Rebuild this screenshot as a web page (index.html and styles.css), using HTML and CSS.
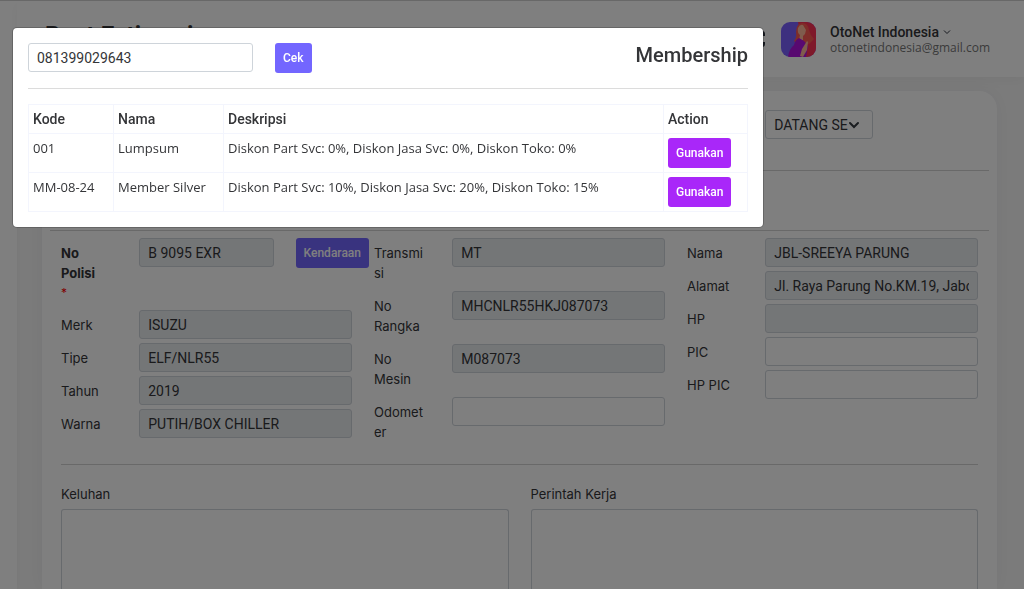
FILE: index.html
```html
<!DOCTYPE html>
<html lang="id">
<head>
<meta charset="utf-8">
<meta name="viewport" content="width=device-width, initial-scale=1">
<title>Buat Estimasi</title>
<link rel="stylesheet" href="styles.css">
</head>
<body>
<div class="app">
  <aside class="sidebar"></aside>
  <div class="main">
    <header class="topbar">
      <h1 class="page-title">Buat Estimasi</h1>
      <svg class="expand" viewBox="0 0 18 18" aria-hidden="true"><path d="M2 6V4q0-2 2-2h2M12 2h2q2 0 2 2v2M16 12v2q0 2-2 2h-2M6 16H4q-2 0-2-2v-2"/></svg>
      <div class="profile">
        <svg class="avatar" viewBox="0 0 35 35" role="img" aria-label="Avatar">
          <defs><clipPath id="round"><rect width="35" height="35" rx="9"/></clipPath></defs>
          <g clip-path="url(#round)">
            <rect width="35" height="35" fill="#7b61ff"/>
            <path d="M17 0h18v35H24z" fill="#ff3355"/>
            <path d="M13 19q3-3 2-9 0-8 6-9 6 0 7 7 1 5 5 9l-5 5-13-1z" fill="#ff5a52"/>
            <path d="M17 6q2-4 5-3l3 5-1 4-2 2v4h-4l1-5q-3-2-2-7z" fill="#ffb99a"/>
            <path d="M7 35q1-8 6-12 1-5 5-7l5 3 4 5-2 11z" fill="#b012e0"/>
            <path d="M21 27l5-8 1 1-1 8-4 7-3-1z" fill="#ffb99a"/>
          </g>
        </svg>
        <div class="who">
          <button class="user" type="button">OtoNet Indonesia
            <svg class="caret" viewBox="0 0 8 8" aria-hidden="true"><path d="M1 2.500l3 3 3-3"/></svg>
          </button>
          <span class="mail">otonetindonesia@gmail.com</span>
        </div>
      </div>
    </header>
    <main class="card">
      <div class="columns kind-row">
        <div class="kind">
          <div class="select-wrap">
            <select class="field select" aria-label="Jenis kedatangan"><option>DATANG SENDIRI</option></select>
            <svg class="chevron" viewBox="0 0 12 12" aria-hidden="true"><path d="M2 4l4 4 4-4"/></svg>
          </div>
        </div>
      </div>
      <hr class="rule">
      <div class="spacer"></div>
      <hr class="rule">
      <div class="columns">
        <div class="stack">
          <div class="row">
            <label class="label strong" for="polisi">No<br>Polisi <span class="star">*</span></label>
            <div class="with-button">
              <input class="field" id="polisi" value="B 9095 EXR" readonly>
              <button class="btn" type="button">Kendaraan</button>
            </div>
          </div>
          <div class="row"><label class="label" for="merk">Merk</label><input class="field" id="merk" value="ISUZU" readonly></div>
          <div class="row"><label class="label" for="tipe">Tipe</label><input class="field" id="tipe" value="ELF/NLR55" readonly></div>
          <div class="row"><label class="label" for="tahun">Tahun</label><input class="field" id="tahun" value="2019" readonly></div>
          <div class="row"><label class="label" for="warna">Warna</label><input class="field" id="warna" value="PUTIH/BOX CHILLER" readonly></div>
        </div>
        <div class="stack">
          <div class="row"><label class="label" for="transmisi">Transmi<br>si</label><input class="field" id="transmisi" value="MT" readonly></div>
          <div class="row"><label class="label" for="rangka">No<br>Rangka</label><input class="field" id="rangka" value="MHCNLR55HKJ087073" readonly></div>
          <div class="row"><label class="label" for="mesin">No<br>Mesin</label><input class="field" id="mesin" value="M087073" readonly></div>
          <div class="row"><label class="label" for="odo">Odomet<br>er</label><input class="field" id="odo"></div>
        </div>
        <div class="stack">
          <div class="row"><label class="label" for="nama">Nama</label><input class="field" id="nama" value="JBL-SREEYA PARUNG" readonly></div>
          <div class="row"><label class="label" for="alamat">Alamat</label><input class="field" id="alamat" value="Jl. Raya Parung No.KM.19, Jabon Mekar" readonly></div>
          <div class="row"><label class="label" for="hp">HP</label><input class="field" id="hp" readonly></div>
          <div class="row"><label class="label" for="pic">PIC</label><input class="field" id="pic"></div>
          <div class="row"><label class="label" for="hppic">HP PIC</label><input class="field" id="hppic"></div>
        </div>
      </div>
      <hr class="rule inner">
      <div class="notes">
        <div class="note"><label class="label" for="keluhan">Keluhan</label><textarea class="field area" id="keluhan"></textarea></div>
        <div class="note"><label class="label" for="perintah">Perintah Kerja</label><textarea class="field area" id="perintah"></textarea></div>
      </div>
    </main>
  </div>
</div>

<div class="backdrop">
  <section class="modal" role="dialog" aria-labelledby="modal-title">
    <div class="modal-head">
      <input class="field search" aria-label="Nomor member" value="081399029643">
      <button class="btn" type="button">Cek</button>
      <h2 class="modal-title" id="modal-title">Membership</h2>
    </div>
    <hr class="modal-rule">
    <table class="members">
      <colgroup><col class="c-kode"><col class="c-nama"><col><col class="c-action"></colgroup>
      <thead><tr><th>Kode</th><th>Nama</th><th>Deskripsi</th><th>Action</th></tr></thead>
      <tbody>
        <tr><td>001</td><td>Lumpsum</td><td>Diskon Part Svc: 0%, Diskon Jasa Svc: 0%, Diskon Toko: 0%</td><td><button class="btn use" type="button">Gunakan</button></td></tr>
        <tr><td>MM-08-24</td><td>Member Silver</td><td>Diskon Part Svc: 10%, Diskon Jasa Svc: 20%, Diskon Toko: 15%</td><td><button class="btn use" type="button">Gunakan</button></td></tr>
      </tbody>
    </table>
  </section>
</div>
</body>
</html>
```

FILE: styles.css
```css
* { box-sizing: border-box; }

body {
  margin: 0;
  height: 100vh;
  overflow: hidden;
  background: #f7f7f7;
  color: #343538;
  font-family: Roboto, "Liberation Sans", sans-serif;
  font-size: 14px;
  line-height: 20px;
}

.app { display: flex; height: 100vh; overflow: hidden; border-top: 1px solid #d0d0d0; }
.sidebar { flex: 0 0 17px; background: #fff; box-shadow: 0 0 6px rgba(0, 0, 0, .04); }
.main { display: flex; flex-direction: column; flex: 1; min-width: 0; }

.topbar {
  display: flex;
  flex: none;
  align-items: center;
  height: 76px;
  padding: 0 34px 0 28px;
  background: #fff;
  box-shadow: 0 3px 12px rgba(0, 0, 0, .04);
}
.page-title { margin: 0 auto 0 0; padding-bottom: 8px; font-size: 24px; line-height: 28px; font-weight: 700; }
.expand { width: 18px; height: 18px; margin-right: 15px; fill: none; stroke: #2c323f; stroke-width: 2; }
.profile { display: flex; align-items: center; gap: 14px; }
.avatar { width: 35px; height: 35px; }
.who { display: flex; flex-direction: column; }
.user {
  display: flex;
  align-items: center;
  gap: 4px;
  padding: 0;
  border: 0;
  background: none;
  color: inherit;
  font: 500 14px/16px Roboto, sans-serif;
}
.caret { width: 8px; height: 8px; fill: none; stroke: #2c323f; }
.mail { font: 12px/15px "Open Sans", sans-serif; color: #777; }

.card {
  display: flex;
  flex-direction: column;
  flex: 1;
  min-height: 0;
  margin: 14px 27px 0 25px;
  padding: 19px 8px 0;
  background: #fff;
  border-radius: 18px 18px 0 0;
  box-shadow: 0 0 20px rgba(8, 21, 66, .05);
}
.columns { display: grid; grid-template-columns: repeat(3, minmax(0, 1fr)); align-items: start; }
.rule { width: 100%; margin: 0; border: 0; border-top: 1px solid #d2d2d2; }
.kind-row { padding-bottom: 31px; }
.spacer { height: 59px; }
.rule + .columns { padding-top: 7px; }

.stack { display: flex; flex-direction: column; gap: 3px; }
.row, .kind { display: grid; grid-template-columns: minmax(0, 1fr) minmax(0, 3fr); align-items: start; }
.kind { grid-column: 3; }
.label { padding: 5px 11px; white-space: nowrap; font-family: Inter, sans-serif; font-size: 13px; }
.strong { font-weight: 700; }
.star { display: block; font-weight: 400; color: #f00; font-size: 12px; line-height: 19px; }
.row > .field { margin: 0 11px; }
.with-button { display: flex; align-items: flex-start; gap: 22px; margin: 0 -6px 0 11px; }
.with-button .field { flex: 1; }

.field {
  display: block;
  min-width: 0;
  height: 29px;
  padding: 3px 8px;
  border: 1px solid #ced4da;
  border-radius: 3px;
  background: #fff;
  color: inherit;
  font: 14px/20px Roboto, sans-serif;
}
input:read-only { background: #e9ecef; }

.select-wrap { position: relative; grid-column: 2; width: 108px; margin-left: 11px; }
.select { width: 100%; padding-right: 24px; appearance: none; }
.chevron {
  position: absolute;
  top: 9px;
  right: 13px;
  width: 12px;
  height: 12px;
  fill: none;
  stroke: #343a40;
  stroke-width: 2;
  stroke-linecap: round;
  pointer-events: none;
}

.btn {
  height: 30px;
  padding: 0 8px;
  border: 0;
  border-radius: 3px;
  background: #7366ff;
  color: #fff;
  font: 500 12px/20px Roboto, sans-serif;
}
.use { background: #a927f9; }

.rule.inner { width: auto; margin: 17px 11px 0; }
.notes { display: grid; grid-template-columns: 1fr 1fr; flex: 1; min-height: 0; padding-top: 14px; }
.note { display: flex; flex-direction: column; }
.area { flex: 1; margin: 0 11px; border-bottom: 0; border-radius: 3px 3px 0 0; resize: none; }

.backdrop { position: fixed; inset: 0; padding: 28px 13px; background: rgba(0, 0, 0, .5); }
.modal {
  max-width: 750px;
  padding: 15px;
  background: #fff;
  border-radius: 4px;
  box-shadow: 0 0 0 1px rgba(0, 0, 0, .2);
}
.modal-head { display: flex; align-items: flex-start; }
.search { width: 225px; margin-right: 22px; }
.modal-title { margin: 0 0 0 auto; font-size: 20px; line-height: 24px; font-weight: 500; }
.modal-rule { margin: 15px 0; border: 0; border-top: 1px solid #dcdcdc; }

.members { width: 100%; border-collapse: collapse; table-layout: fixed; }
.c-kode { width: 85px; }
.c-nama { width: 110px; }
.c-action { width: 84px; }
.members th, .members td {
  padding: 4px;
  border: 1px solid #f3f5fd;
  text-align: left;
  vertical-align: top;
}
.members th { font-weight: 500; }
.members td { font-family: "Open Sans", sans-serif; font-size: 13px; line-height: 20px; }
.members .btn { display: block; }
```
